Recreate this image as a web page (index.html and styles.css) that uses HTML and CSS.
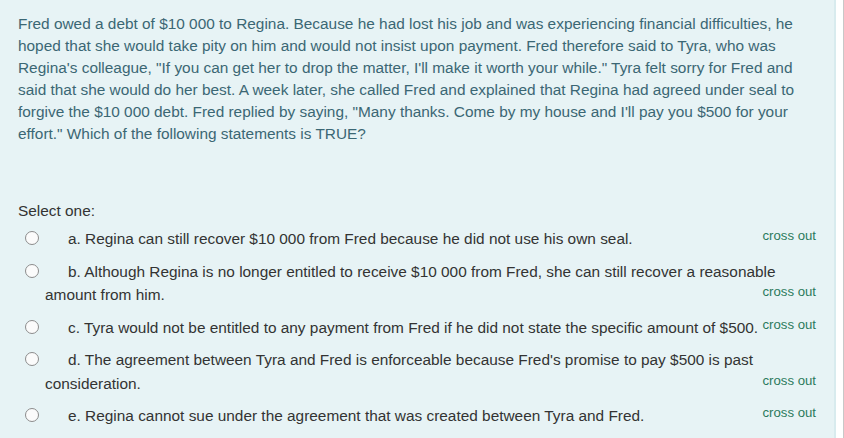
FILE: index.html
```html
<!DOCTYPE html>
<html>
<head>
<meta charset="utf-8">
<link rel="stylesheet" href="styles.css">
</head>
<body>
<div class="frame">
  <div class="formulation">
    <div class="qtext">Fred owed a debt of $10 000 to Regina. Because he had lost his job and was experiencing financial difficulties, he hoped that she would take pity on him and would not insist upon payment. Fred therefore said to Tyra, who was Regina's colleague, "If you can get her to drop the matter, I'll make it worth your while." Tyra felt sorry for Fred and said that she would do her best. A week later, she called Fred and explained that Regina had agreed under seal to forgive the $10 000 debt. Fred replied by saying, "Many thanks. Come by my house and I'll pay you $500 for your effort." Which of the following statements is TRUE?</div>
    <div class="ablock">
      <div class="prompt">Select one:</div>
      <div class="answer">
        <div class="opt"><span class="radio"></span><span class="lbl">a. Regina can still recover $10 000 from Fred because he did not use his own seal.</span><span class="cross">cross out</span></div>
        <div class="opt"><span class="radio"></span><span class="lbl">b. Although Regina is no longer entitled to receive $10 000 from Fred, she can still recover a reasonable amount from him.</span><span class="cross">cross out</span></div>
        <div class="opt"><span class="radio"></span><span class="lbl">c. Tyra would not be entitled to any payment from Fred if he did not state the specific amount of $500.</span><span class="cross">cross out</span></div>
        <div class="opt"><span class="radio"></span><span class="lbl">d. The agreement between Tyra and Fred is enforceable because Fred's promise to pay $500 is past consideration.</span><span class="cross">cross out</span></div>
        <div class="opt"><span class="radio"></span><span class="lbl">e. Regina cannot sue under the agreement that was created between Tyra and Fred.</span><span class="cross">cross out</span></div>
      </div>
    </div>
  </div>
  <div class="side"></div>
</div>
</body>
</html>
```

FILE: styles.css
```css
html, body {
  margin: 0;
  padding: 0;
  background: #ffffff;
}
body {
  font-family: "Liberation Sans", Arial, sans-serif;
  font-size: 15.4px;
  width: 844px;
  height: 438px;
  overflow: hidden;
}
.frame {
  display: flex;
  height: 438px;
}
.formulation {
  flex: none;
  width: 798px;
  background: #e7f3f5;
  border-right: 2px solid #d8ebee;
  padding: 13px 18px 0 18px;
}
.side {
  flex: 1;
  background: #ffffff;
  border-right: 1px solid #c8c8c8;
}
.qtext {
  color: #3b6774;
  line-height: 22px;
}
.ablock {
  margin-top: 55px;
}
.prompt {
  color: #333333;
  line-height: 22px;
}
.answer {
  margin-top: 5px;
}
.opt {
  padding-left: 27px;
  line-height: 23.5px;
  color: #333333;
  margin-bottom: 9px;
}
.radio {
  display: inline-block;
  width: 12px;
  height: 12px;
  border: 1px solid #8c8c8c;
  border-radius: 50%;
  background: #fbfbfb;
  margin-left: -20px;
  margin-right: 29px;
  vertical-align: -1px;
}
.cross {
  float: right;
  font-size: 13.2px;
  line-height: 16px;
  color: #2a7a5c;
  margin-left: 4px;
  margin-top: 1px;
}
```
